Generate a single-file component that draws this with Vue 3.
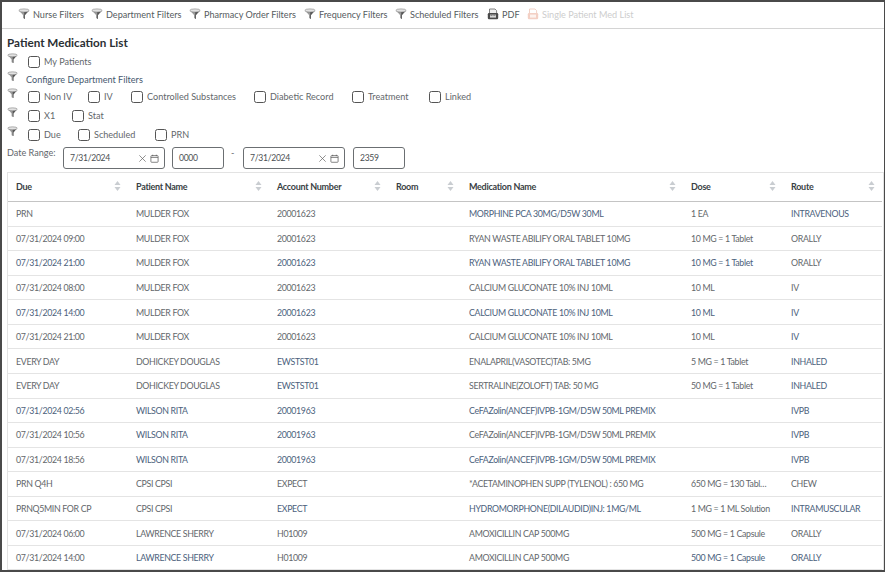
<template>
  <div class="frame">
    <div class="toolbar">
      <a v-for="tool in tools" :key="tool.label" class="tool" :class="{ off: tool.off }" :style="{ width: tool.width + 'px' }">
        <svg v-if="tool.icon === 'pdf'" class="tool-icon" viewBox="0 0 12 12">
          <path d="M2.5 1h5.5l1.6 1.6V6H2.5z" fill="#eee" stroke="#666" stroke-width=".8" />
          <rect x=".8" y="5" width="10.4" height="6.2" rx="1.2" fill="#4a4a4a" />
          <rect x="3" y="6.6" width="6" height="3" fill="#d8d8d8" />
          <path d="M3.6 7.4h1.2M5.6 7.4h.9M7.3 7.4h1" stroke="#333" stroke-width=".7" />
        </svg>
        <svg v-else-if="tool.icon === 'pdf-off'" class="tool-icon" viewBox="0 0 12 12">
          <path d="M2.5 1h5.5l1.6 1.6V6H2.5z" fill="#fff" stroke="#eec5b8" stroke-width=".8" />
          <rect x=".8" y="5" width="10.4" height="6.2" rx="1.2" fill="#f3d0c5" />
          <rect x="3" y="6.6" width="6" height="3" fill="#fdf3ef" />
        </svg>
        <svg v-else class="tool-icon" viewBox="0 0 12 12"><use href="#funnel-shape" /></svg>
        <span>{{ tool.label }}</span>
      </a>
    </div>

    <div class="content">
      <h1 class="title">Patient Medication List</h1>

      <div class="filter-row first">
        <svg class="funnel" viewBox="0 0 12 12"><use href="#funnel-shape" /></svg>
        <label class="check"><i class="box"></i>My Patients</label>
      </div>
      <div class="filter-row link-row">
        <svg class="funnel" viewBox="0 0 12 12"><use href="#funnel-shape" /></svg>
        <a class="config">Configure Department Filters</a>
      </div>
      <div v-for="(group, idx) in filterGroups" :key="idx" class="filter-row">
        <svg class="funnel" viewBox="0 0 12 12"><use href="#funnel-shape" /></svg>
        <label v-for="item in group" :key="item.label" class="check" :style="{ width: item.width + 'px' }"><i class="box"></i>{{ item.label }}</label>
      </div>

      <div class="date-row">
        <span class="date-label">Date Range:</span>
        <div class="field date">
          <span>7/31/2024</span>
          <span class="field-icons">
            <svg viewBox="0 0 10 10"><path d="M1.5 1.5l7 7M8.5 1.5l-7 7" stroke="#666" stroke-width=".8" fill="none" /></svg>
            <svg viewBox="0 0 10 10"><rect x="1" y="1.8" width="8" height="7.4" rx=".8" stroke="#555" stroke-width=".8" fill="none" /><path d="M1 3.8h8M3 .8v1.6M7 .8v1.6" stroke="#555" stroke-width=".8" /></svg>
          </span>
        </div>
        <div class="field time">0000</div>
        <span class="dash">-</span>
        <div class="field date">
          <span>7/31/2024</span>
          <span class="field-icons">
            <svg viewBox="0 0 10 10"><path d="M1.5 1.5l7 7M8.5 1.5l-7 7" stroke="#666" stroke-width=".8" fill="none" /></svg>
            <svg viewBox="0 0 10 10"><rect x="1" y="1.8" width="8" height="7.4" rx=".8" stroke="#555" stroke-width=".8" fill="none" /><path d="M1 3.8h8M3 .8v1.6M7 .8v1.6" stroke="#555" stroke-width=".8" /></svg>
          </span>
        </div>
        <div class="field time end">2359</div>
      </div>

      <div class="table-wrap">
        <table class="grid">
          <colgroup>
            <col v-for="col in columns" :key="col.label" :style="{ width: col.width + 'px' }" />
          </colgroup>
          <thead>
            <tr>
              <th v-for="col in columns" :key="col.label">
                <div class="th-inner">
                  <span>{{ col.label }}</span>
                  <svg class="sort" viewBox="0 0 7 10"><path d="M3.5 0 6.5 4H.5zM3.5 10 .5 6h6z" fill="#c9cdd1" /></svg>
                </div>
              </th>
            </tr>
          </thead>
          <tbody>
            <tr v-for="(row, idx) in rows" :key="idx">
              <td v-for="(val, c) in row.cells" :key="c" :class="{ cool: row.cool.includes(c) }">{{ val }}</td>
            </tr>
          </tbody>
        </table>
      </div>
    </div>

    <svg class="defs" width="0" height="0">
      <symbol id="funnel-shape" viewBox="0 0 12 12">
        <path d="M1.5 3 10.5 3 7 7V11L5 10V7z" fill="#9c9c9c" />
        <path d="M6.2 3H10.5L7 7V11L6.2 10.6z" fill="#555" />
        <ellipse cx="6" cy="2.5" rx="5.2" ry="1.6" fill="#e2e2e2" stroke="#7d7d7d" stroke-width=".6" />
      </symbol>
    </svg>
  </div>
</template>

<script setup>
const tools = [
  { label: 'Nurse Filters', width: 73 },
  { label: 'Department Filters', width: 98 },
  { label: 'Pharmacy Order Filters', width: 115 },
  { label: 'Frequency Filters', width: 91 },
  { label: 'Scheduled Filters', width: 92 },
  { label: 'PDF', width: 40, icon: 'pdf' },
  { label: 'Single Patient Med List', width: 110, icon: 'pdf-off', off: true },
]

const filterGroups = [
  [
    { label: 'Non IV', width: 60 },
    { label: 'IV', width: 43 },
    { label: 'Controlled Substances', width: 123 },
    { label: 'Diabetic Record', width: 98 },
    { label: 'Treatment', width: 77 },
    { label: 'Linked', width: 60 },
  ],
  [
    { label: 'X1', width: 44 },
    { label: 'Stat', width: 50 },
  ],
  [
    { label: 'Due', width: 50 },
    { label: 'Scheduled', width: 77 },
    { label: 'PRN', width: 50 },
  ],
]

const columns = [
  { label: 'Due', width: 120 },
  { label: 'Patient Name', width: 141 },
  { label: 'Account Number', width: 119 },
  { label: 'Room', width: 73 },
  { label: 'Medication Name', width: 222 },
  { label: 'Dose', width: 100 },
  { label: 'Route', width: 99 },
]

// cool = cell indexes that read blue-ish in the reference
const rows = [
  { cells: ['PRN', 'MULDER FOX', '20001623', '', 'MORPHINE PCA 30MG/D5W 30ML', '1 EA', 'INTRAVENOUS'], cool: [4, 6] },
  { cells: ['07/31/2024 09:00', 'MULDER FOX', '20001623', '', 'RYAN WASTE ABILIFY ORAL TABLET 10MG', '10 MG = 1 Tablet', 'ORALLY'], cool: [] },
  { cells: ['07/31/2024 21:00', 'MULDER FOX', '20001623', '', 'RYAN WASTE ABILIFY ORAL TABLET 10MG', '10 MG = 1 Tablet', 'ORALLY'], cool: [0, 2, 4, 5] },
  { cells: ['07/31/2024 08:00', 'MULDER FOX', '20001623', '', 'CALCIUM GLUCONATE 10% INJ 10ML', '10 ML', 'IV'], cool: [] },
  { cells: ['07/31/2024 14:00', 'MULDER FOX', '20001623', '', 'CALCIUM GLUCONATE 10% INJ 10ML', '10 ML', 'IV'], cool: [0, 2, 4, 5, 6] },
  { cells: ['07/31/2024 21:00', 'MULDER FOX', '20001623', '', 'CALCIUM GLUCONATE 10% INJ 10ML', '10 ML', 'IV'], cool: [6] },
  { cells: ['EVERY DAY', 'DOHICKEY DOUGLAS', 'EWSTST01', '', 'ENALAPRIL(VASOTEC)TAB: 5MG', '5 MG = 1 Tablet', 'INHALED'], cool: [2, 6] },
  { cells: ['EVERY DAY', 'DOHICKEY DOUGLAS', 'EWSTST01', '', 'SERTRALINE(ZOLOFT) TAB: 50 MG', '50 MG = 1 Tablet', 'INHALED'], cool: [2, 6] },
  { cells: ['07/31/2024 02:56', 'WILSON RITA', '20001963', '', 'CeFAZolin(ANCEF)IVPB-1GM/D5W 50ML PREMIX', '', 'IVPB'], cool: [0, 1, 2, 4, 6] },
  { cells: ['07/31/2024 10:56', 'WILSON RITA', '20001963', '', 'CeFAZolin(ANCEF)IVPB-1GM/D5W 50ML PREMIX', '', 'IVPB'], cool: [1, 2, 6] },
  { cells: ['07/31/2024 18:56', 'WILSON RITA', '20001963', '', 'CeFAZolin(ANCEF)IVPB-1GM/D5W 50ML PREMIX', '', 'IVPB'], cool: [1, 2, 4, 6] },
  { cells: ['PRN Q4H', 'CPSI CPSI', 'EXPECT', '', '*ACETAMINOPHEN SUPP (TYLENOL) : 650 MG', '650 MG = 130 Tabl…', 'CHEW'], cool: [] },
  { cells: ['PRNQ5MIN FOR CP', 'CPSI CPSI', 'EXPECT', '', 'HYDROMORPHONE(DILAUDID)INJ: 1MG/ML', '1 MG = 1 ML Solution', 'INTRAMUSCULAR'], cool: [2, 4, 6] },
  { cells: ['07/31/2024 06:00', 'LAWRENCE SHERRY', 'H01009', '', 'AMOXICILLIN CAP 500MG', '500 MG = 1 Capsule', 'ORALLY'], cool: [] },
  { cells: ['07/31/2024 14:00', 'LAWRENCE SHERRY', 'H01009', '', 'AMOXICILLIN CAP 500MG', '500 MG = 1 Capsule', 'ORALLY'], cool: [1, 5, 6] },
]
</script>

<style>
html, body {
  margin: 0;
  background: #fff;
}
</style>

<style scoped>
.frame {
  width: 885px;
  height: 572px;
  box-sizing: border-box;
  border: 2px solid #4a4a4a;
  border-right-width: 1px;
  overflow: hidden;
  background: #fff;
  font-family: Lato, "Noto Sans", sans-serif;
  font-size: 9.1px;
  color: #63676b;
}

.toolbar {
  display: flex;
  align-items: center;
  height: 24px;
  padding: 0 0 2px 16px;
  border-bottom: 1px solid #d4d4d4;
}

.tool {
  display: flex;
  align-items: center;
  gap: 3px;
  color: #565b60;
  white-space: nowrap;
}

.tool.off {
  color: #cdcdcd;
}

.tool-icon {
  width: 12px;
  height: 12px;
  flex: none;
}

.content {
  padding: 6px 0 0 5px;
}

.title {
  margin: 0;
  height: 15px;
  font-size: 11.7px;
  line-height: 15px;
  font-weight: 700;
  color: #2b2f33;
}

.filter-row {
  display: flex;
  align-items: center;
  height: 19px;
}

.filter-row.first {
  margin-top: 2px;
}

.filter-row.link-row {
  height: 16px;
}

.funnel {
  width: 11px;
  height: 11px;
  margin: -6px 10px 0 0;
  flex: none;
}

.link-row .funnel {
  margin-right: 8px;
}

.check {
  display: flex;
  align-items: center;
  gap: 4px;
  white-space: nowrap;
}

.box {
  width: 10px;
  height: 10px;
  flex: none;
  border: 1px solid #555;
  border-radius: 2.5px;
  background: #fff;
}

.config {
  color: #46586e;
}

.date-row {
  display: flex;
  align-items: flex-start;
  margin-top: 3px;
  height: 22px;
}

.date-label {
  width: 56px;
  line-height: 12px;
}

.field {
  box-sizing: border-box;
  height: 22px;
  display: flex;
  align-items: center;
  justify-content: space-between;
  padding: 0 5px 0 6px;
  border: 1px solid #6b6f72;
  border-radius: 3px;
  color: #4a4f53;
  font-size: 8.6px;
  letter-spacing: -0.3px;
}

.date {
  width: 102px;
}

.time {
  width: 52px;
  margin-left: 7px;
}

.time.end {
  margin-left: 8px;
}

.dash {
  width: 12px;
  margin-left: 7px;
  line-height: 12px;
}

.field-icons {
  display: flex;
  gap: 3px;
}

.field-icons svg {
  width: 9px;
  height: 9px;
}

.table-wrap {
  width: 875px;
  margin-top: 3px;
  border: 1px solid #e3e3e3;
  border-bottom: none;
}

.grid {
  width: 874px;
  border-collapse: collapse;
  table-layout: fixed;
}

.grid th {
  height: 26px;
  padding: 0 8px 2px;
  border-bottom: 1px solid #c4c4c4;
  font-size: 9px;
  letter-spacing: -0.28px;
  font-weight: 700;
  text-align: left;
  color: #3a3f44;
}

.th-inner {
  display: flex;
  align-items: center;
  justify-content: space-between;
}

.sort {
  width: 7px;
  height: 10px;
  margin-right: -1px;
}

.grid td {
  height: 23.57px;
  padding: 0 8px;
  border-bottom: 1px solid #e4e4e4;
  font-size: 8.8px;
  letter-spacing: -0.33px;
  white-space: nowrap;
  overflow: hidden;
}

.grid td.cool {
  color: #4b617c;
}

.defs {
  position: absolute;
}
</style>
